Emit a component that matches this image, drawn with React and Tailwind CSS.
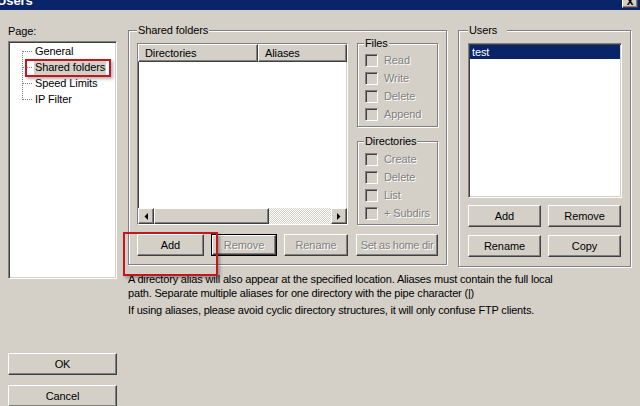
import React from "react";

const raised =
  "border border-t-white border-l-white border-r-[#404040] border-b-[#404040] shadow-[inset_-1px_-1px_0_#808080] bg-[#d4d0c8]";
const sunken =
  "border border-t-[#808080] border-l-[#808080] border-r-white border-b-white shadow-[inset_1px_1px_0_#404040,inset_-1px_-1px_0_#d4d0c8]";
const etched =
  "border border-[#808080] shadow-[inset_1px_1px_0_#fff,1px_1px_0_#fff]";
const disabledText = "text-[#808080] [text-shadow:1px_1px_0_#fff]";

function Btn({ children, className = "", disabled = false }) {
  return (
    <div className={`flex items-center justify-center ${raised} ${className}`}>
      <span className={disabled ? disabledText : "text-black"}>{children}</span>
    </div>
  );
}

function Check({ label }) {
  return (
    <div className="flex h-[18px] items-center pl-[7px]">
      <div className={`w-[13px] h-[13px] bg-[#d4d0c8] ${sunken}`} />
      <span className={`ml-[6px] ${disabledText}`}>{label}</span>
    </div>
  );
}

function Group({ label, className = "", labelClass = "", children }) {
  return (
    <div className={`${etched} ${className}`}>
      <div className={`-mt-[7px] h-[13px] leading-[13px] w-fit bg-[#d4d0c8] px-[1px] ${labelClass}`}>
        {label}
      </div>
      {children}
    </div>
  );
}

function Arrow({ dir }) {
  return (
    <div className={`w-[16px] h-full flex items-center justify-center ${raised}`}>
      <svg width="4" height="7" viewBox="0 0 4 7">
        {dir === "left" ? (
          <polygon points="4,0 4,7 0.5,3.5" fill="#000" />
        ) : (
          <polygon points="0,0 0,7 3.5,3.5" fill="#000" />
        )}
      </svg>
    </div>
  );
}

export default function App() {
  return (
    <div
      className="relative w-[640px] h-[406px] overflow-hidden bg-[#d4d0c8] text-[11px] leading-[13px] text-black flex flex-col tracking-[-0.1px]"
      style={{ fontFamily: '"Liberation Sans", Arial, sans-serif' }}
    >
      {/* Title bar */}
      <div className="h-[10px] bg-[#0a246a] flex justify-between overflow-hidden shrink-0">
        <div className="-ml-[3px] -mt-[7px] text-white font-bold text-[13px] leading-[16px]">Users</div>
        <div className={`mr-[2px] -mt-[6px] w-[16px] h-[14px] flex items-end justify-center ${raised}`}>
          <span className="text-[12px] leading-[11px] font-bold">x</span>
        </div>
      </div>

      <div className="flex">
        {/* Left column */}
        <div className="ml-[8px] w-[109px] flex flex-col shrink-0">
          <div className="mt-[15px] h-[13px]">Page:</div>
          <div className={`mt-[3px] h-[238px] bg-white ${sunken} pt-[1px]`}>
            <div className="flex pl-[13px]">
              <svg width="12" height="64" viewBox="0 0 12 64" className="shrink-0">
                <g stroke="#808080" strokeWidth="1" strokeDasharray="1 1">
                  <line x1="0.5" y1="8" x2="0.5" y2="57" />
                  <line x1="1" y1="8.5" x2="10" y2="8.5" />
                  <line x1="1" y1="24.5" x2="10" y2="24.5" />
                  <line x1="1" y1="40.5" x2="10" y2="40.5" />
                  <line x1="1" y1="56.5" x2="10" y2="56.5" />
                </g>
              </svg>
              <div className="flex flex-col">
                <div className="h-[16px] flex items-center pl-[1px]">General</div>
                <div className="h-[16px] flex items-center">
                  <span className="bg-[#d4d0c8] px-[1px] h-[15px] flex items-center">Shared folders</span>
                </div>
                <div className="h-[16px] flex items-center pl-[1px]">Speed Limits</div>
                <div className="h-[16px] flex items-center pl-[1px]">IP Filter</div>
              </div>
            </div>
          </div>
          <Btn className="mt-[74px] h-[22px]">OK</Btn>
          <Btn className="mt-[10px] h-[22px]">Cancel</Btn>
        </div>

        {/* Middle column */}
        <div className="ml-[11px] w-[319px] flex flex-col shrink-0">
          <Group label="Shared folders" className="mt-[20px] h-[235px] pl-[8px]">
            <div className="mt-[6px] flex">
              <div className={`w-[211px] h-[182px] bg-white ${sunken} flex flex-col`}>
                <div className="flex h-[18px]">
                  <div className={`w-[120px] ${raised} flex items-center pl-[6px]`}>Directories</div>
                  <div className={`flex-1 ${raised} flex items-center pl-[6px]`}>Aliases</div>
                </div>
                <div className="flex-1" />
                <div className="h-[16px] flex">
                  <Arrow dir="left" />
                  <div className={`w-[115px] ${raised}`} />
                  <div className="flex-1 bg-[repeating-conic-gradient(#fff_0_25%,#d4d0c8_0_50%)] bg-[length:2px_2px]" />
                  <Arrow dir="right" />
                </div>
              </div>
              <div className="ml-[9px] flex flex-col">
                <Group label="Files" className="w-[81px] h-[84px]" labelClass="ml-[6px]">
                  <div className="mt-[1px]">
                    <Check label="Read" />
                    <Check label="Write" />
                    <Check label="Delete" />
                    <Check label="Append" />
                  </div>
                </Group>
                <Group label="Directories" className="mt-[14px] w-[81px] h-[84px]" labelClass="ml-[6px]">
                  <div className="mt-[2px]">
                    <Check label="Create" />
                    <Check label="Delete" />
                    <Check label="List" />
                    <Check label="+ Subdirs" />
                  </div>
                </Group>
              </div>
            </div>
            <div className="mt-[9px] flex h-[22px]">
              <Btn className="w-[67px] h-full">Add</Btn>
              <div className="ml-[7px] w-[66px] h-full border border-black flex">
                <Btn className="flex-1 h-full" disabled>Remove</Btn>
              </div>
              <Btn className="ml-[7px] w-[64px] h-full" disabled>Rename</Btn>
              <Btn className="ml-[8px] w-[82px] h-full" disabled>
                <span className="tracking-[-0.3px]">Set as home dir</span>
              </Btn>
            </div>
          </Group>
          <div className="mt-[7px] leading-[14px] whitespace-nowrap tracking-[-0.18px]">
            A directory alias will also appear at the specified location. Aliases must contain the full local
            <br />
            path. Separate multiple aliases for one directory with the pipe character (|)
          </div>
          <div className="mt-[3px] leading-[14px] whitespace-nowrap tracking-[-0.18px]">
            If using aliases, please avoid cyclic directory structures, it will only confuse FTP clients.
          </div>
        </div>

        {/* Right column */}
        <div className="ml-[11px] w-[173px] flex flex-col shrink-0">
          <Group label="Users" className="mt-[20px] h-[237px] pl-[9px]" labelClass="pr-[10px]">
            <div className={`mt-[6px] w-[154px] h-[155px] bg-white ${sunken} p-[1px]`}>
              <div className="h-[14px] bg-[#0a246a] text-white flex items-center pl-[2px]">test</div>
            </div>
            <div className="mt-[7px] flex h-[22px]">
              <Btn className="w-[73px] h-full">Add</Btn>
              <Btn className="ml-[7px] w-[73px] h-full">Remove</Btn>
            </div>
            <div className="mt-[8px] flex h-[22px]">
              <Btn className="w-[73px] h-full">Rename</Btn>
              <Btn className="ml-[7px] w-[73px] h-full">Copy</Btn>
            </div>
          </Group>
        </div>
      </div>

      {/* Red annotation boxes */}
      <div className="absolute left-[25px] top-[59px] w-[86px] h-[18px] border-2 border-[#c4161c] shadow-[2px_2px_3px_rgba(0,0,0,0.3)]" />
      <div className="absolute left-[123px] top-[232px] w-[95px] h-[44px] border-2 border-[#c4161c] shadow-[2px_2px_3px_rgba(0,0,0,0.3)]" />
    </div>
  );
}
